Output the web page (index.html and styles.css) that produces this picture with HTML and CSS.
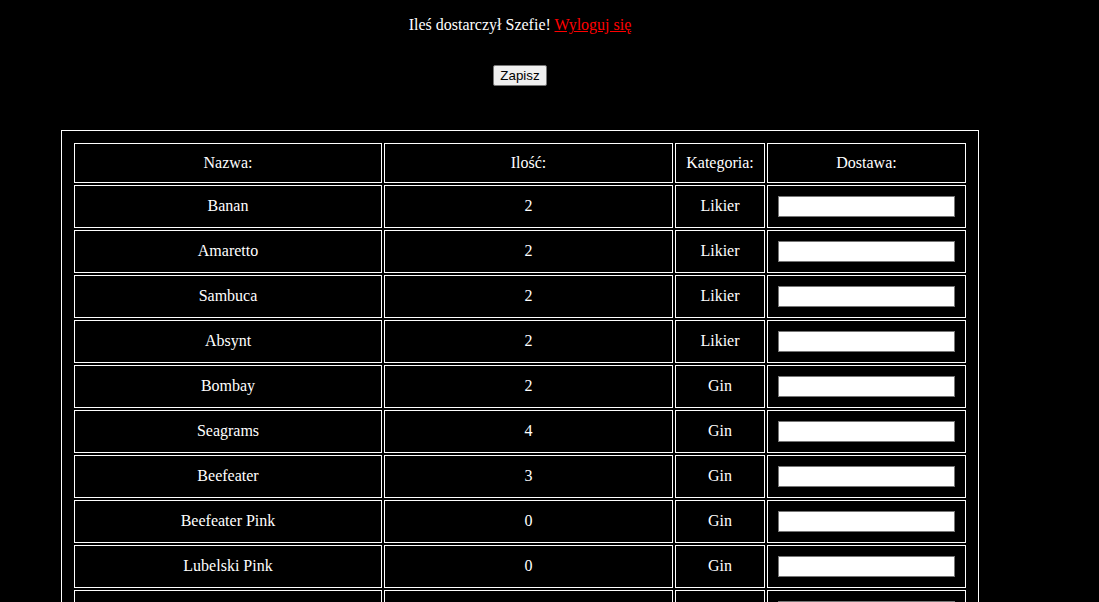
FILE: index.html
```html
<!DOCTYPE html>
<html lang="pl">
<head>
<meta charset="utf-8">
<title>Dostawa</title>
<link rel="stylesheet" href="styles.css">
</head>
<body>
<div class="page">
  <p class="greet">Ileś dostarczył Szefie! <a href="#" class="logout">Wyloguj się</a></p>
  <form class="delivery">
    <div class="actions"><button type="button" class="save">Zapisz</button></div>
    <table class="stock">
      <thead>
        <tr>
          <th class="c-name">Nazwa:</th>
          <th class="c-qty">Ilość:</th>
          <th class="c-cat">Kategoria:</th>
          <th class="c-del">Dostawa:</th>
        </tr>
      </thead>
      <tbody>
        <tr><td>Banan</td><td>2</td><td>Likier</td><td class="c-input"><input type="text" class="qty-in"></td></tr>
        <tr><td>Amaretto</td><td>2</td><td>Likier</td><td class="c-input"><input type="text" class="qty-in"></td></tr>
        <tr><td>Sambuca</td><td>2</td><td>Likier</td><td class="c-input"><input type="text" class="qty-in"></td></tr>
        <tr><td>Absynt</td><td>2</td><td>Likier</td><td class="c-input"><input type="text" class="qty-in"></td></tr>
        <tr><td>Bombay</td><td>2</td><td>Gin</td><td class="c-input"><input type="text" class="qty-in"></td></tr>
        <tr><td>Seagrams</td><td>4</td><td>Gin</td><td class="c-input"><input type="text" class="qty-in"></td></tr>
        <tr><td>Beefeater</td><td>3</td><td>Gin</td><td class="c-input"><input type="text" class="qty-in"></td></tr>
        <tr><td>Beefeater Pink</td><td>0</td><td>Gin</td><td class="c-input"><input type="text" class="qty-in"></td></tr>
        <tr><td>Lubelski Pink</td><td>0</td><td>Gin</td><td class="c-input"><input type="text" class="qty-in"></td></tr>
        <tr><td>Gordons</td><td>1</td><td>Gin</td><td class="c-input"><input type="text" class="qty-in"></td></tr>
        <tr><td>Hendricks</td><td>1</td><td>Gin</td><td class="c-input"><input type="text" class="qty-in"></td></tr>
      </tbody>
    </table>
  </form>
</div>
</body>
</html>
```

FILE: styles.css
```css
html, body {
  background: #000;
}
body {
  margin: 0;
  color: #fff;
  font-family: "Liberation Serif", "Times New Roman", serif;
  font-size: 16px;
  line-height: 18px;
}
.page {
  width: 1040px;
  text-align: center;
  padding-top: 16px;
}
.greet {
  margin: 0;
  line-height: 18px;
}
.logout {
  color: #ff0000;
  text-decoration: underline;
}
.delivery {
  margin: 0;
}
.actions {
  display: flex;
  justify-content: center;
  margin-top: 31px;
}
.save {
  font-family: "Liberation Sans", Arial, sans-serif;
  font-size: 13.333px;
  color: #000;
  background: #efefef;
  border: 1px solid #767676;
  border-radius: 2px;
  height: 21px;
  width: 54px;
  padding: 1px 6px;
  margin: 0;
  box-sizing: border-box;
}
.stock {
  margin: 44px auto 0;
  width: 918px;
  table-layout: fixed;
  border: 1px solid #fff;
  padding: 10px;
  border-spacing: 2px;
  border-collapse: separate;
}
.stock th,
.stock td {
  border: 1px solid #fff;
  padding: 10px;
  text-align: center;
  vertical-align: middle;
  font-weight: normal;
  line-height: 18px;
  box-sizing: border-box;
}
.stock td {
  padding: 9px 10px 11px;
}
.stock td.c-input {
  padding: 10px;
}
.c-name { width: 308px; }
.c-qty { width: 289px; }
.c-cat { width: 90px; }
.c-del { width: 199px; }
.qty-in {
  display: block;
  box-sizing: border-box;
  width: 177px;
  height: 21px;
  margin: 0;
  padding: 1px 2px;
  border: 1px solid #767676;
  background: #fff;
}
```
